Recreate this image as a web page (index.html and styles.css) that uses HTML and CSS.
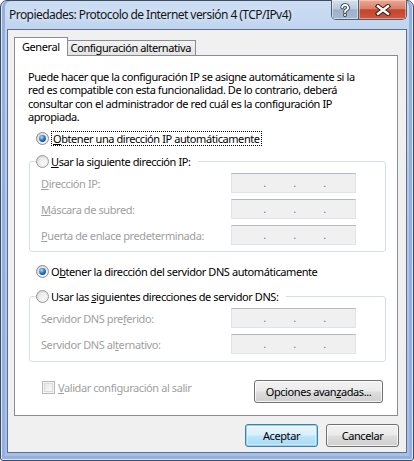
FILE: index.html
```html
<!DOCTYPE html>
<html lang="es">
<head>
<meta charset="utf-8">
<title>Propiedades: Protocolo de Internet versión 4 (TCP/IPv4)</title>
<link rel="stylesheet" href="styles.css">
</head>
<body>
<svg class="defs" width="0" height="0" aria-hidden="true">
  <defs>
    <linearGradient id="radio-ring" x1="0" y1="0" x2="1" y2="1">
      <stop offset="0" stop-color="#d0d0d0"/>
      <stop offset="1" stop-color="#f8f8f8"/>
    </linearGradient>
    <linearGradient id="radio-well" x1="0" y1="0" x2="1" y2="1">
      <stop offset="0" stop-color="#e4e4e4"/>
      <stop offset="1" stop-color="#fdfdfd"/>
    </linearGradient>
    <radialGradient id="radio-dot" cx="0.38" cy="0.32" r="0.75">
      <stop offset="0" stop-color="#c4e8fc"/>
      <stop offset="0.35" stop-color="#4c9fe0"/>
      <stop offset="0.75" stop-color="#155ea6"/>
      <stop offset="1" stop-color="#0f3d6f"/>
    </radialGradient>
    <linearGradient id="check-well" x1="0" y1="0" x2="1" y2="1">
      <stop offset="0" stop-color="#e6e6e6"/>
      <stop offset="1" stop-color="#fbfbfb"/>
    </linearGradient>
  </defs>
</svg>

<div class="window">
  <div class="titlebar">
    <span class="title">Propiedades: Protocolo de Internet versión 4 (TCP/IPv4)</span>
    <div class="caption">
      <button class="cap cap-help" aria-label="Ayuda">
        <svg width="14" height="14" viewBox="0 0 14 14">
          <path d="M4.2 4.6a2.9 2.6 0 1 1 4.2 2.3c-1 .55-1.4 1-1.4 2.1" fill="none" stroke="#2f3a4d" stroke-width="3.6" stroke-linecap="round"/>
          <circle cx="7" cy="12" r="1.9" fill="#2f3a4d"/>
          <path d="M4.2 4.6a2.9 2.6 0 1 1 4.2 2.3c-1 .55-1.4 1-1.4 2.1" fill="none" stroke="#fff" stroke-width="1.9" stroke-linecap="round"/>
          <circle cx="7" cy="12" r="1.05" fill="#fff"/>
        </svg>
      </button>
      <button class="cap cap-close" aria-label="Cerrar">
        <svg width="16" height="12" viewBox="0 0 16 12">
          <path d="M3 2.2 13 9.8M13 2.2 3 9.8" stroke="#3a1b14" stroke-width="4.4" stroke-linecap="square"/>
          <path d="M3 2.2 13 9.8M13 2.2 3 9.8" stroke="#fff" stroke-width="2.4" stroke-linecap="square"/>
        </svg>
      </button>
    </div>
  </div>

  <div class="client">
    <div class="tabs">
      <div class="tab tab-active">General</div>
      <div class="tab">Configuración alternativa</div>
    </div>

    <div class="panel">
      <div class="intro">
        <p>Puede hacer que la configuración IP se asigne automáticamente si la</p>
        <p>red es compatible con esta funcionalidad. De lo contrario, deberá</p>
        <p>consultar con el administrador de red cuál es la configuración IP</p>
        <p>apropiada.</p>
      </div>

      <label class="opt opt-first">
        <svg class="radio" width="13" height="13" viewBox="0 0 13 13">
          <circle cx="6.5" cy="6.5" r="6" fill="url(#radio-ring)" stroke="#8e8f8f"/>
          <circle cx="6.5" cy="6.5" r="4.3" fill="url(#radio-well)"/>
          <circle cx="6.5" cy="6.5" r="3.4" fill="url(#radio-dot)"/>
        </svg>
        <span class="focus"><u>O</u>btener una dirección IP automáticamente</span>
      </label>

      <fieldset class="group">
        <legend>
          <label class="opt">
            <svg class="radio" width="13" height="13" viewBox="0 0 13 13">
              <circle cx="6.5" cy="6.5" r="6" fill="url(#radio-ring)" stroke="#9a9a9a"/>
              <circle cx="6.5" cy="6.5" r="4.3" fill="url(#radio-well)"/>
            </svg>
            <span><u>U</u>sar la siguiente dirección IP:</span>
          </label>
        </legend>
        <div class="field">
          <span class="label"><u>D</u>irección IP:</span>
          <div class="ip"><span>.</span><span>.</span><span>.</span></div>
        </div>
        <div class="field">
          <span class="label"><u>M</u>áscara de subred:</span>
          <div class="ip"><span>.</span><span>.</span><span>.</span></div>
        </div>
        <div class="field">
          <span class="label"><u>P</u>uerta de enlace predeterminada:</span>
          <div class="ip"><span>.</span><span>.</span><span>.</span></div>
        </div>
      </fieldset>

      <label class="opt opt-dns">
        <svg class="radio" width="13" height="13" viewBox="0 0 13 13">
          <circle cx="6.5" cy="6.5" r="6" fill="url(#radio-ring)" stroke="#8e8f8f"/>
          <circle cx="6.5" cy="6.5" r="4.3" fill="url(#radio-well)"/>
          <circle cx="6.5" cy="6.5" r="3.4" fill="url(#radio-dot)"/>
        </svg>
        <span>O<u>b</u>tener la dirección del servidor DNS automáticamente</span>
      </label>

      <fieldset class="group group-dns">
        <legend>
          <label class="opt">
            <svg class="radio" width="13" height="13" viewBox="0 0 13 13">
              <circle cx="6.5" cy="6.5" r="6" fill="url(#radio-ring)" stroke="#9a9a9a"/>
              <circle cx="6.5" cy="6.5" r="4.3" fill="url(#radio-well)"/>
            </svg>
            <span>Usar las <u>s</u>iguientes direcciones de servidor DNS:</span>
          </label>
        </legend>
        <div class="field">
          <span class="label">Servidor DNS pre<u>f</u>erido:</span>
          <div class="ip"><span>.</span><span>.</span><span>.</span></div>
        </div>
        <div class="field">
          <span class="label">Servidor DNS al<u>t</u>ernativo:</span>
          <div class="ip"><span>.</span><span>.</span><span>.</span></div>
        </div>
      </fieldset>

      <div class="panel-foot">
        <label class="check">
          <svg width="13" height="13" viewBox="0 0 13 13">
            <rect x="0.5" y="0.5" width="12" height="12" fill="#f4f4f4" stroke="#b9b9b9"/>
            <rect x="2.5" y="2.5" width="8" height="8" fill="url(#check-well)" stroke="#dadada"/>
          </svg>
          <span><u>V</u>alidar configuración al salir</span>
        </label>
        <button class="btn btn-wide">Opciones avan<u>z</u>adas...</button>
      </div>
    </div>

    <div class="actions">
      <button class="btn btn-default">Aceptar</button>
      <button class="btn">Cancelar</button>
    </div>
  </div>
</div>
</body>
</html>
```

FILE: styles.css
```css
* {
  box-sizing: border-box;
}

html,
body {
  margin: 0;
  padding: 0;
}

body {
  width: 414px;
  height: 461px;
  overflow: hidden;
  background: #fff;
  color: #000;
  font-family: "Noto Sans", "Open Sans", sans-serif;
  font-size: 11px;
  letter-spacing: -0.42px;
}

.defs {
  position: absolute;
  width: 0;
  height: 0;
}

u {
  text-decoration-thickness: 1px;
  text-underline-offset: 1px;
}

/* ---------- window frame ---------- */
.window {
  width: 414px;
  height: 461px;
  display: flex;
  flex-direction: column;
  padding: 0 6px 7px;
  border: 1px solid #3c4c64;
  border-radius: 7px 7px 3px 3px;
  background: linear-gradient(#cddef3 0, #c0d4ee 28px, #b1c9ea 180px, #a6c0e8 100%);
  box-shadow:
    inset 1px 0 #dbe6f6,
    inset -1px 0 #dbe6f6,
    inset 0 -1px #dbe6f6,
    inset 4px 0 #93b0e0,
    inset -4px 0 #93b0e0,
    inset 0 -4px #93b0e0;
}

.titlebar {
  height: 28px;
  display: flex;
  align-items: flex-start;
}

.title {
  padding-left: 2px;
  font-size: 12px;
  line-height: 28px;
  letter-spacing: -0.55px;
  color: #10151c;
  text-shadow: 0 0 6px rgba(255, 255, 255, 0.9);
  white-space: nowrap;
}

.caption {
  display: flex;
  margin: -1px 0 0 auto;
  height: 20px;
  border: 1px solid #4f5d74;
  border-top: none;
  border-radius: 0 0 5px 5px;
  overflow: hidden;
}

.cap {
  display: flex;
  align-items: center;
  justify-content: center;
  height: 100%;
  margin: 0;
  padding: 0;
  border: none;
}

.cap-help {
  width: 27px;
  border-right: 1px solid #4f5d74;
  background: linear-gradient(#d5dfec 0%, #bccadd 45%, #9fb0c9 52%, #a8b9d2 100%);
  box-shadow: inset 0 0 0 1px rgba(255, 255, 255, 0.45);
}

.cap-close {
  width: 47px;
  background: linear-gradient(#eaa998 0%, #d9806a 45%, #c4432c 52%, #d2583b 100%);
  box-shadow: inset 0 0 0 1px rgba(255, 220, 210, 0.5);
}

/* ---------- client area ---------- */
.client {
  flex: 1;
  display: flex;
  flex-direction: column;
  padding: 7px 7px 5px 6px;
  border: 1px solid #5d6f8c;
  background: #f0f0f0;
}

.tabs {
  height: 18px;
  display: flex;
  align-items: flex-end;
}

.tab {
  height: 15px;
  padding: 0 4px 0 3px;
  line-height: 14px;
  border: 1px solid #898c95;
  border-bottom: none;
  border-left: none;
  background: linear-gradient(#f3f3f3, #e4e4e4);
  white-space: nowrap;
}

.tab-active {
  position: relative;
  z-index: 1;
  height: 19px;
  margin-bottom: -1px;
  padding: 0 7px;
  line-height: 17px;
  border-left: 1px solid #898c95;
  background: #fff;
}

.panel {
  margin-right: 1px;
  padding: 14px 0 12px;
  border: 1px solid #898c95;
  background: #fff;
}

/* four wrapped lines, 13.33px apart */
.intro {
  margin: 0 13px;
}

.intro p {
  margin: 0;
  height: 13.33px;
  line-height: 13.33px;
  white-space: nowrap;
}

/* ---------- radio rows ---------- */
.opt {
  display: flex;
  align-items: center;
  gap: 2px;
  height: 15px;
  line-height: 13px;
  white-space: nowrap;
}

.opt-first,
.opt-dns {
  margin-left: 21px;
}

.opt-first {
  margin-top: 8px;
}

.opt-dns {
  margin-top: 12px;
}

.radio {
  flex: none;
}

.focus {
  display: inline-block;
  height: 15px;
  padding: 0 1px;
  line-height: 13px;
  border: 1px dotted #000;
}

/* ---------- group boxes ---------- */
.group {
  margin: 8px 11px 0 14px;
  padding: 4px 29px 6px 11px;
  border: 1px solid #d5dfe5;
  border-radius: 3px;
  min-width: 0;
}

.group-dns {
  margin-top: 10px;
  padding-bottom: 7px;
}

.group legend {
  margin-left: -5px;
  padding: 0 8px 0 0;
  height: 15px;
}

.field {
  display: flex;
  align-items: center;
  height: 20px;
}

.field + .field {
  margin-top: 6px;
}

.label {
  color: #a0a0a0;
  white-space: nowrap;
}

.ip {
  display: flex;
  gap: 27px;
  width: 125px;
  height: 20px;
  margin-left: auto;
  padding-left: 31px;
  line-height: 18px;
  border: 1px solid #dfe4ea;
  border-top-color: #b5b8bf;
  background: #f0f0f0;
  color: #7679a0;
}

.ip span {
  width: 3px;
  text-align: center;
}

/* ---------- footer of the tab page ---------- */
.panel-foot {
  display: flex;
  align-items: flex-start;
  justify-content: space-between;
  margin: 18px 14px 0 27px;
}

.check {
  display: flex;
  align-items: center;
  gap: 3px;
  height: 14px;
  color: #a0a0a0;
  white-space: nowrap;
}

/* ---------- push buttons ---------- */
.btn {
  height: 23px;
  width: 73px;
  margin: 0;
  padding: 0;
  border: 1px solid #707070;
  border-radius: 3px;
  background: linear-gradient(#f2f2f2 0%, #ebebeb 48%, #dddddd 52%, #cfcfcf 100%);
  box-shadow: inset 0 0 0 1px rgba(255, 255, 255, 0.75);
  color: #000;
  font: inherit;
  letter-spacing: inherit;
  text-align: center;
}

.btn-wide {
  width: 129px;
}

.btn-default {
  border-color: #3c7fb1;
  background: linear-gradient(#eaf6fd 0%, #d9f0fc 48%, #bee6fd 52%, #a7d9f5 100%);
  box-shadow: inset 0 0 0 1px #98d1ef, inset 0 0 0 2px rgba(255, 255, 255, 0.35);
}

.actions {
  display: flex;
  justify-content: flex-end;
  gap: 8px;
  margin-top: 8px;
}
```
